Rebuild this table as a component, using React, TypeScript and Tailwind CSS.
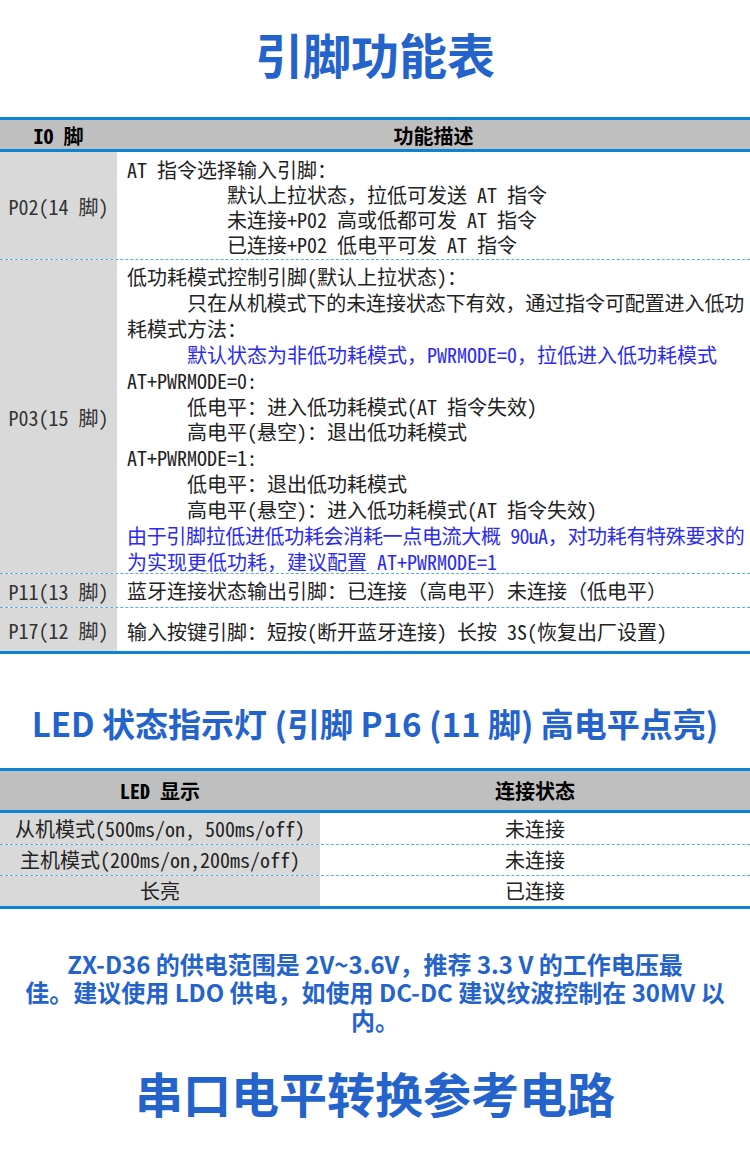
import React from 'react'
import clsx from 'clsx'

// SimSun-like metrics: CJK full width, latin half width
const bodyFont = "font-['Noto_Sans_Mono_CJK_SC','Noto_Sans_CJK_SC',sans-serif]"
const titleFont = "font-['Noto_Sans_CJK_SC',sans-serif]"

type Line = { text: string; cls?: string; blue?: boolean }

type PinRow = { pin: string; rowCls: string; textCls: string; lines: Line[] }

const pinRows: PinRow[] = [
  {
    pin: 'P02(14 脚)',
    rowCls: 'h-[108px]',
    textCls: 'pt-[5px] leading-[25px]',
    lines: [
      { text: 'AT 指令选择输入引脚：' },
      { text: '默认上拉状态，拉低可发送 AT 指令', cls: 'pl-[100px]' },
      { text: '未连接+P02 高或低都可发 AT 指令', cls: 'pl-[100px]' },
      { text: '已连接+P02 低电平可发 AT 指令', cls: 'pl-[100px]' },
    ],
  },
  {
    pin: 'P03(15 脚)',
    rowCls: 'h-[314px]',
    textCls: 'pt-[4px] leading-[25.9px]',
    lines: [
      { text: '低功耗模式控制引脚(默认上拉状态)：' },
      {
        text: '只在从机模式下的未连接状态下有效，通过指令可配置进入低功',
        cls: 'pl-[60px] tracking-[-0.3px] whitespace-nowrap text-justify [text-align-last:justify]',
      },
      { text: '耗模式方法：' },
      { text: '默认状态为非低功耗模式，PWRMODE=0，拉低进入低功耗模式', cls: 'pl-[60px]', blue: true },
      { text: 'AT+PWRMODE=0:' },
      { text: '低电平：进入低功耗模式(AT 指令失效)', cls: 'pl-[60px]' },
      { text: '高电平(悬空)：退出低功耗模式', cls: 'pl-[60px]' },
      { text: 'AT+PWRMODE=1:' },
      { text: '低电平：退出低功耗模式', cls: 'pl-[60px]' },
      { text: '高电平(悬空)：进入低功耗模式(AT 指令失效)', cls: 'pl-[60px]' },
      {
        text: '由于引脚拉低进低功耗会消耗一点电流大概 90uA，对功耗有特殊要求的',
        cls: 'tracking-[-0.7px] whitespace-nowrap text-justify [text-align-last:justify]',
        blue: true,
      },
      { text: '为实现更低功耗，建议配置 AT+PWRMODE=1', blue: true },
    ],
  },
  {
    pin: 'P11(13 脚)',
    rowCls: 'h-[34px] items-center',
    textCls: 'leading-[26px] flex items-center',
    lines: [{ text: '蓝牙连接状态输出引脚：已连接（高电平）未连接（低电平）' }],
  },
  {
    pin: 'P17(12 脚)',
    rowCls: 'h-[43px]',
    textCls: 'leading-[26px] flex items-center pt-[4px]',
    lines: [{ text: '输入按键引脚：短按(断开蓝牙连接) 长按 3S(恢复出厂设置)' }],
  },
]

const ledRows = [
  { mode: '从机模式(500ms/on, 500ms/off)', state: '未连接', rowCls: 'h-[32px] border-b border-dashed' },
  { mode: '主机模式(200ms/on,200ms/off)', state: '未连接', rowCls: 'h-[31px] border-b border-dashed' },
  { mode: '长亮', state: '已连接', rowCls: 'h-[30px]' },
]

function PinTable() {
  return (
    <div className={clsx('border-y-[3px] border-[#0b84d4] text-[20px] text-[#222]', bodyFont)}>
      <div className="flex h-[32px] items-center border-b-[3px] border-[#0b84d4] bg-[#bfbfbf] pt-[2px] font-bold text-black">
        <div className="w-[117px] shrink-0 text-center">IO 脚</div>
        <div className="flex-1 text-center">功能描述</div>
      </div>
      {pinRows.map((row, i) => (
        <div
          key={row.pin}
          className={clsx(
            'flex',
            row.rowCls,
            i < pinRows.length - 1 && 'border-b border-dashed border-[#56aee8]',
          )}
        >
          <div className="flex w-[117px] shrink-0 items-center justify-center self-stretch bg-[#d9d9d9] pt-[3px] text-[#333]">
            {row.pin}
          </div>
          <div className={clsx('min-w-0 flex-1 self-stretch pl-[10px] pr-[6px]', row.textCls)}>
            <div className="w-full">
              {row.lines.map((line, j) => (
                <div key={j} className={clsx(line.cls, line.blue && 'text-[#2a2af2]')}>
                  {line.text}
                </div>
              ))}
            </div>
          </div>
        </div>
      ))}
    </div>
  )
}

function LedTable() {
  return (
    <div className={clsx('border-y-[3px] border-[#0b84d4] text-[20px] text-[#222]', bodyFont)}>
      <div className="grid h-[42px] grid-cols-[320px_1fr] items-center border-b-[3px] border-[#0b84d4] bg-[#bfbfbf] font-bold text-black">
        <div className="text-center">LED 显示</div>
        <div className="text-center">连接状态</div>
      </div>
      {ledRows.map((row) => (
        <div key={row.mode} className={clsx('grid grid-cols-[320px_1fr] border-[#56aee8]', row.rowCls)}>
          <div className="flex items-center justify-center bg-[#d9d9d9] whitespace-nowrap">{row.mode}</div>
          <div className="flex items-center justify-center">{row.state}</div>
        </div>
      ))}
    </div>
  )
}

export default function App() {
  return (
    <div className={clsx('min-h-[1154px] w-[750px] overflow-hidden bg-white', titleFont)}>
      <div className="h-[117px] pt-[29px]">
        <h1 className="text-center text-[48px] leading-[48px] font-bold text-[#2563cc]">引脚功能表</h1>
      </div>

      <PinTable />

      <div className="h-[114px] pt-[49px]">
        <h2 className="text-center text-[33px] leading-[40px] font-bold whitespace-nowrap text-[#2563cc]">
          LED 状态指示灯 (引脚 P16 (11 脚) 高电平点亮)
        </h2>
      </div>

      <LedTable />

      <div className="pt-[41px] text-center text-[24px] leading-[28px] font-bold text-[#2563cc]">
        <p className="whitespace-nowrap">ZX-D36 的供电范围是 2V~3.6V，推荐 3.3 V 的工作电压最</p>
        <p className="whitespace-nowrap">佳。建议使用 LDO 供电，如使用 DC-DC 建议纹波控制在 30MV 以</p>
        <p className="whitespace-nowrap">内。</p>
      </div>

      <div className="pt-[34px]">
        <h2 className="text-center text-[48px] leading-[48px] font-bold text-[#2563cc]">串口电平转换参考电路</h2>
      </div>
    </div>
  )
}
